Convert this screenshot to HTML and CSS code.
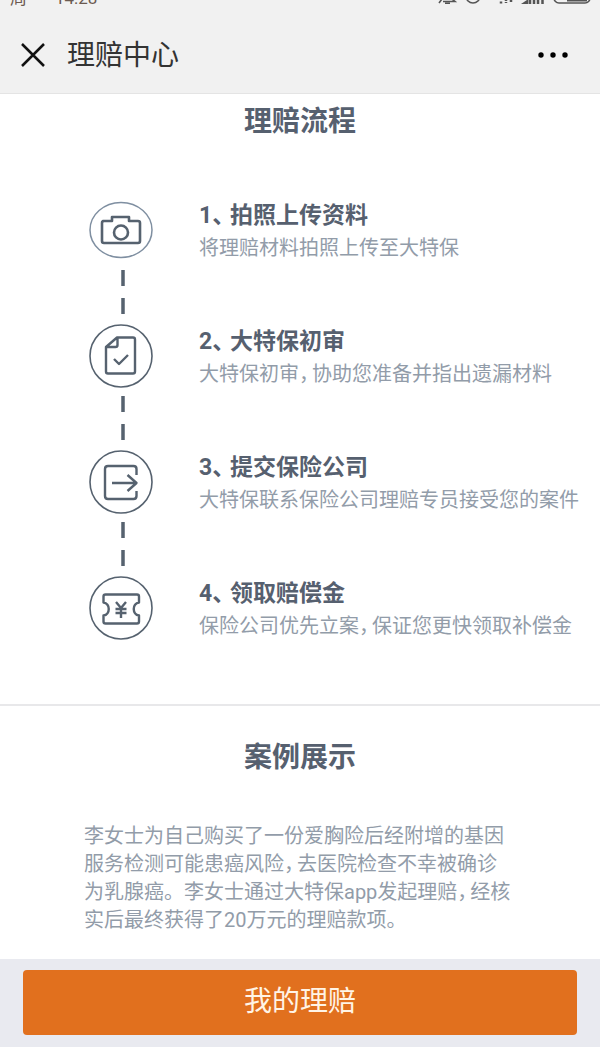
FILE: index.html
```html
<!DOCTYPE html>
<html lang="zh-CN">
<head>
  <meta charset="UTF-8">
  <meta name="viewport" content="width=device-width, initial-scale=1.0">
  <link rel="stylesheet" href="styles.css">
  <title>理赔中心</title>
</head>
<body>
  <header class="header">
    <div class="statusBar">
      <div class="statusTime"><span>周</span><span>14:28</span></div>
      <svg class="statusIcons" width="156" height="20" viewBox="0 0 156 20" fill="none" stroke="#555" stroke-width="1.600">
        <path d="M4 19L7 15V9a5 5 0 0 1 10 0v6l3 2.500H8M10 19.300h5"/>
        <circle cx="38" cy="12" r="7"/>
        <path d="M66 17.500v2M71 15v4M76 16v3" stroke-width="2.500" stroke-dasharray="2 1"/>
        <path d="M89 19.500h3v-2zM95 15v5M99 13v7M103 11v9M107.500 9v11" stroke-width="2.500"/>
        <rect x="119" y="6" width="36" height="13" rx="5"/>
        <path d="M132 14h20" stroke-width="7"/>
      </svg>
    </div>
    <div class="navBar">
      <button class="iconButton" aria-label="关闭">
        <svg width="24" height="24" viewBox="0 0 24 24" fill="none" stroke="#111" stroke-width="2.500">
          <path d="M1 1L23 23M23 1L1 23"/>
        </svg>
      </button>
      <h1 class="navTitle">理赔中心</h1>
      <button class="iconButton" aria-label="更多">
        <svg width="30" height="24" viewBox="0 0 30 24" fill="#000">
          <circle cx="3" cy="12" r="2.700"/>
          <circle cx="15" cy="12" r="2.700"/>
          <circle cx="27" cy="12" r="2.700"/>
        </svg>
      </button>
    </div>
  </header>

  <main class="content">
    <section class="process">
      <h2 class="sectionTitle">理赔流程</h2>
      <ol class="steps">
        <li class="step">
          <div class="stepIcon">
            <svg width="64" height="64" viewBox="0 0 64 64" fill="none" stroke="#56626f" stroke-width="2.600" stroke-linejoin="round">
              <ellipse cx="32" cy="32" rx="31" ry="27.500" stroke="#7f8fa1" stroke-width="1.500"/>
              <path d="M14 23h9v-4h17v4h9q2 0 2 2v18q0 2-2 2H15q-2 0-2-2V25q0-2 2-2z"/>
              <circle cx="32" cy="34.500" r="7"/>
            </svg>
            <svg class="connector" width="64" height="62" viewBox="0 0 64 62" stroke="#56626f" stroke-width="3.500">
              <path d="M34 8v16M34 36v16"/>
            </svg>
          </div>
          <div class="stepText">
            <h3><span class="stepNumber">1、</span>拍照上传资料</h3>
            <p>将理赔材料拍照上传至大特保</p>
          </div>
        </li>
        <li class="step">
          <div class="stepIcon">
            <svg width="64" height="64" viewBox="0 0 64 64" fill="none" stroke="#56626f" stroke-width="2.400" stroke-linejoin="round">
              <circle cx="32" cy="32" r="31" stroke-width="1.600"/>
              <path d="M28 13.500h16q2 0 2 2v32q0 2-2 2H19q-2 0-2-2V23zM28.500 14v7q0 2-2 2H18"/>
              <path d="M25 35l5 5 9-9"/>
            </svg>
            <svg class="connector" width="64" height="62" viewBox="0 0 64 62" stroke="#56626f" stroke-width="3.500">
              <path d="M34 8v16M34 36v16"/>
            </svg>
          </div>
          <div class="stepText">
            <h3><span class="stepNumber">2、</span>大特保初审</h3>
            <p>大特保初审<span class="comma">，</span>协助您准备并指出遗漏材料</p>
          </div>
        </li>
        <li class="step">
          <div class="stepIcon">
            <svg width="64" height="64" viewBox="0 0 64 64" fill="none" stroke="#56626f" stroke-width="2.400" stroke-linejoin="round">
              <circle cx="32" cy="32" r="31" stroke-width="1.600"/>
              <path d="M47.500 25v-6q0-3-3-3H19q-3 0-3 3v27q0 3 3 3h25.500q3 0 3-3v-5"/>
              <path d="M23 33h24M38.500 25l9 8-9 8"/>
            </svg>
            <svg class="connector" width="64" height="62" viewBox="0 0 64 62" stroke="#56626f" stroke-width="3.500">
              <path d="M34 8v16M34 36v16"/>
            </svg>
          </div>
          <div class="stepText">
            <h3><span class="stepNumber">3、</span>提交保险公司</h3>
            <p>大特保联系保险公司理赔专员接受您的案件</p>
          </div>
        </li>
        <li class="step">
          <div class="stepIcon">
            <svg width="64" height="64" viewBox="0 0 64 64" fill="none" stroke="#56626f" stroke-width="2.400" stroke-linejoin="round">
              <circle cx="32" cy="32" r="31" stroke-width="1.600"/>
              <path d="M16.500 18.500H48q2 0 2 2v6c-7 1-7 12 0 13v6q0 2-2 2H16.500q-2 0-2-2v-6c7-1 7-12 0-13v-6q0-2 2-2z"/>
              <path d="M27 26l5 6 5-6M32 32v10M26.500 33h11M26.500 37h11"/>
            </svg>
          </div>
          <div class="stepText">
            <h3><span class="stepNumber">4、</span>领取赔偿金</h3>
            <p>保险公司优先立案<span class="comma">，</span>保证您更快领取补偿金</p>
          </div>
        </li>
      </ol>
    </section>

    <section class="cases">
      <h2 class="sectionTitle">案例展示</h2>
      <p class="caseText">
        李女士为自己购买了一份爱胸险后经附增的基因<br>
        服务检测可能患癌风险<span class="comma">，</span>去医院检查不幸被确诊<br>
        为乳腺癌。李女士通过大特保app发起理赔<span class="comma">，</span>经核<br>
        实后最终获得了20万元的理赔款项。
      </p>
    </section>
  </main>

  <footer class="footer">
    <button class="claimButton">我的理赔</button>
  </footer>
</body>
</html>
```
FILE: styles.css
```css
* {
  box-sizing: border-box;
}

body {
  display: flex;
  flex-direction: column;
  min-height: 100vh;
  margin: 0;
  font-family: Roboto, "Noto Sans CJK SC", sans-serif;
  color: #56606f;
  background-color: #fff;
}

h1, h2, h3, p, ol {
  margin: 0;
  padding: 0;
}

button {
  border: 0;
  font-family: inherit;
  cursor: pointer;
}

svg {
  display: block;
}

.header {
  background-color: #f1f1f1;
  border-bottom: 1px solid #e4e4e4;
}

/* only the bottom edge of the status bar is visible */
.statusBar {
  display: flex;
  justify-content: space-between;
  align-items: flex-end;
  height: 8px;
  padding: 0 9px 0 10px;
  overflow: hidden;
}

.statusTime {
  display: flex;
  gap: 28px;
  font-size: 17px;
  line-height: 20px;
  color: #6b5a50;
}

.statusIcons {
  flex: none;
  margin-bottom: 4px;
}

.navBar {
  display: flex;
  align-items: center;
  gap: 22px;
  height: 85px;
  padding: 8px 32px 0 21px;
}

.iconButton {
  padding: 0;
  background: none;
}

.navTitle {
  flex: 1;
  padding-top: 2px;
  font-size: 28px;
  font-weight: 400;
  line-height: 40px;
  color: #333;
}

.content {
  flex: 1;
}

.process {
  padding: 8px 0 62px;
  border-bottom: 2px solid #e8e8ea;
}

.sectionTitle {
  font-size: 28px;
  font-weight: 700;
  line-height: 40px;
  text-align: center;
}

.steps {
  margin-top: 56px;
  padding-left: 89px;
  list-style: none;
}

.step {
  display: flex;
  gap: 46px;
}

.stepIcon {
  flex: none;
}

.stepText {
  padding-top: 2px;
}

.stepText h3 {
  font-size: 23px;
  font-weight: 700;
  line-height: 32px;
  white-space: nowrap;
}

.stepNumber {
  display: inline-block;
  width: 31px;
  font-feature-settings: "halt";
}

.stepText p {
  font-size: 20px;
  line-height: 32px;
  color: #929ca9;
  white-space: nowrap;
}

.comma {
  margin-right: 3px;
  font-feature-settings: "halt";
}

.cases {
  padding: 32px 84px 25px;
}

.caseText {
  margin-top: 44px;
  font-size: 20px;
  line-height: 28px;
  color: #929ca9;
}

.footer {
  padding: 11px 23px 12px;
  background-color: #e9eaf0;
}

.claimButton {
  width: 100%;
  height: 65px;
  padding: 0 0 8px;
  border-radius: 4px;
  font-size: 28px;
  font-weight: 400;
  color: #fff4e6;
  background-color: #e1701e;
}
```
